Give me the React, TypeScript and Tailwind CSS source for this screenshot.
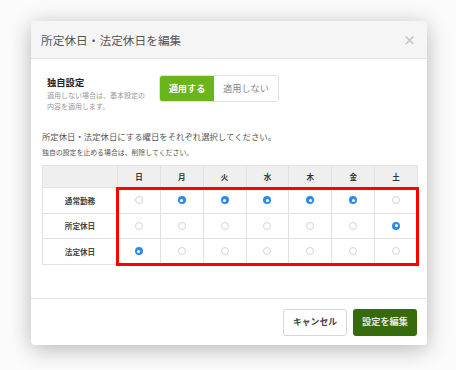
import React from "react";

const days = ["日", "月", "火", "水", "木", "金", "土"];

const rows: { label: string; checked: boolean[] }[] = [
  { label: "通常勤務", checked: [false, true, true, true, true, true, false] },
  { label: "所定休日", checked: [false, false, false, false, false, false, true] },
  { label: "法定休日", checked: [true, false, false, false, false, false, false] },
];

function Radio({ on }: { on: boolean }) {
  if (on) {
    return (
      <span className="inline-flex w-[8px] h-[8px] rounded-full bg-[#2b8af0] items-center justify-center">
        <span className="w-[3px] h-[3px] rounded-full bg-white" />
      </span>
    );
  }
  return <span className="inline-block w-[8px] h-[8px] rounded-full border border-[#d4d4d4] bg-white" />;
}

export default function App() {
  return (
    <div
      className="w-[456px] h-[370px] bg-[#fbfbfb] pt-[21px] pl-[31px] overflow-hidden"
      style={{ fontFamily: '"Noto Sans CJK JP", "Noto Sans", sans-serif' }}
    >
      <div className="w-[396px] h-[324px] bg-white rounded-[4px] shadow-[0_4px_22px_rgba(0,0,0,0.28)] flex flex-col overflow-hidden">
        <header className="h-[38px] shrink-0 bg-[#f5f5f5] border-b border-[#e3e3e3] flex items-center justify-between pl-[10px] pr-[11px]">
          <h2 className="text-[11.7px] text-[#555] leading-none">所定休日・法定休日を編集</h2>
          <span className="text-[13px] font-bold text-[#c4c4c4] leading-none">×</span>
        </header>

        <div className="flex-1 px-[11px] pt-[16px] relative">
          <div className="flex items-start">
            <div className="pl-[5px] w-[117px] pt-[1px]">
              <div className="text-[9.3px] font-bold text-[#222] leading-[12px]">独自設定</div>
              <div className="text-[7px] text-[#999] leading-[11px] mt-[2px]">
                適用しない場合は、基本設定の
                <br />
                内容を適用します。
              </div>
            </div>
            <div className="flex h-[27px] rounded-[3px] border border-[#e2e2e2] overflow-hidden">
              <div className="w-[54px] bg-[#6bb51c] text-white text-[9.2px] font-bold flex items-center justify-center">
                適用する
              </div>
              <div className="w-[64px] bg-white text-[#888] text-[9.2px] flex items-center justify-center">
                適用しない
              </div>
            </div>
          </div>

          <p className="text-[8.4px] text-[#555] leading-[12px] mt-[18px]">
            所定休日・法定休日にする曜日をそれぞれ選択してください。
          </p>
          <p className="text-[6.9px] text-[#555] leading-[10px] mt-[5px]">
            独自の設定を止める場合は、削除してください。
          </p>

          <div className="relative mt-[8px] w-[376px]">
            <table className="w-full border-collapse table-fixed">
              <thead>
                <tr className="h-[22px] bg-[#efefef]">
                  <th className="w-[75px] border border-[#e2e2e2]" />
                  {days.map((d) => (
                    <th key={d} className="border border-[#e2e2e2] text-[7.5px] font-bold text-[#333]">
                      {d}
                    </th>
                  ))}
                </tr>
              </thead>
              <tbody>
                {rows.map((r) => (
                  <tr key={r.label} className="h-[25.5px]">
                    <td className="border border-[#e2e2e2] text-center text-[7.6px] font-bold text-[#444]">
                      {r.label}
                    </td>
                    {r.checked.map((c, i) => (
                      <td key={i} className="border border-[#e2e2e2] text-center align-middle">
                        <div className="flex items-center justify-center">
                          <Radio on={c} />
                        </div>
                      </td>
                    ))}
                  </tr>
                ))}
              </tbody>
            </table>
            <div className="absolute left-[74px] top-[22px] right-[-1px] bottom-[-1px] border-[3px] border-[#ff0000] pointer-events-none" />
          </div>
        </div>

        <footer className="h-[47px] shrink-0 border-t border-[#e6e6e6] flex items-center justify-end gap-[6px] pr-[10px]">
          <button className="h-[27px] w-[64px] rounded-[3px] border border-[#d6d6d6] bg-white text-[8.8px] font-bold text-[#444]">
            キャンセル
          </button>
          <button className="h-[27px] w-[64px] rounded-[3px] bg-[#356b0a] text-[9.2px] font-bold text-[#e6e6e6]">
            設定を編集
          </button>
        </footer>
      </div>
    </div>
  );
}
